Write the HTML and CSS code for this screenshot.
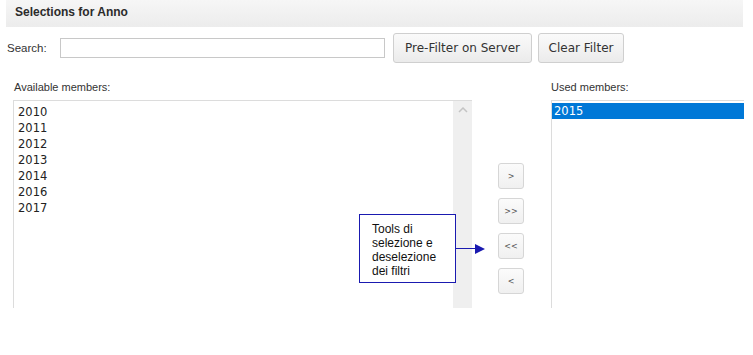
FILE: index.html
```html
<!DOCTYPE html>
<html>
<head>
<meta charset="utf-8">
<link rel="stylesheet" href="styles.css">
</head>
<body>
<div class="panel">
  <div class="header">Selections for Anno</div>
  <div class="search-row">
    <label class="lbl search-lbl">Search:</label>
    <input class="search-input" type="text">
    <button class="btn btn-pre">Pre-Filter on Server</button>
    <button class="btn btn-clear">Clear Filter</button>
  </div>
  <div class="labels-row">
    <span class="lbl avail-lbl">Available members:</span>
    <span class="lbl used-lbl">Used members:</span>
  </div>
  <div class="lists-row">
    <div class="listbox left-box">
      <ul class="items">
        <li>2010</li>
        <li>2011</li>
        <li>2012</li>
        <li>2013</li>
        <li>2014</li>
        <li>2016</li>
        <li>2017</li>
      </ul>
      <div class="scrolltrack">
        <svg class="chev" width="10" height="6" viewBox="0 0 10 6"><path d="M1 5 L5 1 L9 5" fill="none" stroke="#c4c4c4" stroke-width="1.5"/></svg>
      </div>
    </div>
    <div class="move-col">
      <button class="mv">&gt;</button>
      <button class="mv">&gt;&gt;</button>
      <button class="mv">&lt;&lt;</button>
      <button class="mv">&lt;</button>
    </div>
    <div class="listbox right-box">
      <ul class="items">
        <li class="sel">2015</li>
      </ul>
    </div>
  </div>
  <div class="callout">
    <div class="callout-box">Tools di<br>selezione e<br>deselezione<br>dei filtri</div>
    <div class="callout-line"></div>
    <div class="callout-head"></div>
  </div>
</div>
</body>
</html>
```
FILE: styles.css
```css
html, body {
  margin: 0;
  padding: 0;
  background: #fff;
}
.panel {
  position: relative;
  width: 753px;
  height: 355px;
  font-family: "Liberation Sans", Arial, sans-serif;
  color: #333;
}
.header {
  margin-left: 6px;
  width: 728px;
  height: 27px;
  padding-left: 9px;
  background: linear-gradient(#f6f6f6, #ececec);
  font-weight: bold;
  font-size: 12px;
  line-height: 25px;
  color: #2b2b2b;
}
.search-row {
  display: flex;
  align-items: center;
  height: 30px;
  margin-top: 6px;
  padding-left: 7px;
}
.lbl {
  font-size: 11px;
  color: #333;
}
.search-lbl {
  font-size: 11.5px;
  width: 53px;
}
.search-input {
  box-sizing: border-box;
  width: 325px;
  height: 20px;
  margin: 0;
  border: 1px solid #c8c8c8;
  padding: 0 3px;
}
.btn {
  box-sizing: border-box;
  height: 30px;
  margin: 0;
  border: 1px solid #cfcfcf;
  border-radius: 3px;
  background: linear-gradient(#fafafa, #ebebeb);
  font-family: "DejaVu Sans", Verdana, sans-serif;
  font-size: 12px;
  color: #333;
  padding: 0 9px;
}
.btn-pre {
  width: 139px;
  margin-left: 8px;
}
.btn-clear {
  width: 86px;
  margin-left: 6px;
}
.labels-row {
  display: flex;
  height: 16px;
  margin-top: 16px;
  line-height: 16px;
}
.avail-lbl {
  margin-left: 14px;
  width: 537px;
}
.lists-row {
  display: flex;
  margin-top: 5px;
  margin-left: 13px;
}
.listbox {
  box-sizing: border-box;
  height: 208px;
  border: 1px solid #dcdcdc;
  border-right: none;
  border-bottom: none;
  background: #fff;
}
.left-box {
  width: 459px;
  display: flex;
}
.right-box {
  width: 193px;
}
.items {
  list-style: none;
  margin: 0;
  padding: 3px 0 0 0;
  font-family: "DejaVu Sans", Verdana, sans-serif;
  font-size: 11.5px;
  line-height: 16px;
  color: #222;
  flex: 1;
}
.items li {
  padding-left: 4px;
  height: 16px;
}
.right-box .items {
  padding-top: 2px;
}
.items li.sel {
  background: #0078d7;
  color: #fff;
  padding-left: 2px;
}
.scrolltrack {
  width: 19px;
  background: #efefef;
  display: flex;
  justify-content: center;
  padding-top: 6px;
  box-sizing: border-box;
}
.chev {
  display: block;
}
.move-col {
  width: 79px;
  display: flex;
  flex-direction: column;
  padding-top: 63px;
  padding-left: 26px;
  box-sizing: border-box;
  gap: 9px;
}
.mv {
  box-sizing: border-box;
  width: 26px;
  height: 26px;
  margin: 0;
  padding: 0;
  border: 1px solid #d6d6d6;
  border-radius: 3px;
  background: linear-gradient(#fbfbfb, #f0f0f0);
  font-family: "DejaVu Sans", Verdana, sans-serif;
  font-size: 8px;
  color: #555;
}
.callout {
  position: absolute;
  left: 359px;
  top: 214px;
  display: flex;
  align-items: center;
}
.callout-box {
  box-sizing: border-box;
  width: 97px;
  height: 69px;
  border: 1px solid #1a1ab0;
  background: #fff;
  padding: 7px 0 0 12px;
  font-family: "Liberation Sans", Arial, sans-serif;
  font-size: 12px;
  line-height: 14px;
  color: #111;
}
.callout-line {
  width: 19px;
  height: 1px;
  background: #1a1ab0;
}
.callout-head {
  width: 0;
  height: 0;
  border-top: 5px solid transparent;
  border-bottom: 5px solid transparent;
  border-left: 10px solid #1a1ab0;
}
```
